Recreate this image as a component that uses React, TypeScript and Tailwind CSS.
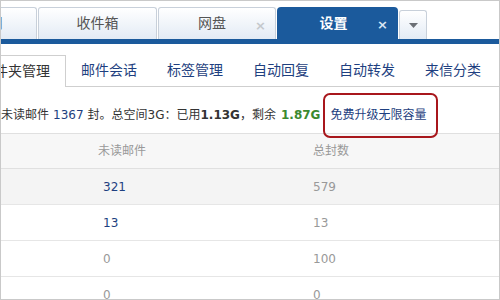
import React from "react";

const font = "font-['DejaVu_Sans','Noto_Sans_CJK_SC',sans-serif]";

type Row = { unread: number; total: number; active?: boolean };

const rows: Row[] = [
  { unread: 321, total: 579, active: true },
  { unread: 13, total: 13 },
  { unread: 0, total: 100 },
  { unread: 0, total: 0 },
];

const subTabs = ["邮件会话", "标签管理", "自动回复", "自动转发", "来信分类"];

function Close({ light }: { light?: boolean }) {
  return (
    <span
      className={`text-[13px] font-bold leading-none ${light ? "text-[#dbe6f3]" : "text-[#c4c8cc]"}`}
    >
      ×
    </span>
  );
}

export default function App() {
  return (
    <div
      className={`relative box-border h-[300px] w-[500px] overflow-hidden border border-[#c9c9c9] bg-white ${font}`}
    >
      {/* top tab strip */}
      <div className="flex flex-col">
        <div className="h-[6px]" />
        <div className="flex h-[32px] items-end gap-px">
          <div className="ml-[-83px] flex h-[32px] w-[119px] shrink-0 items-center justify-end rounded-t-[3px] border border-b-0 border-[#c8d0da] bg-gradient-to-b from-white to-[#e3ebf5] pr-[33px] text-[14px] text-[#555]">
            常用
          </div>
          <div className="flex h-[32px] w-[119px] shrink-0 items-center justify-center rounded-t-[3px] border border-b-0 border-[#c8d0da] bg-gradient-to-b from-white to-[#e3ebf5] text-[14px] text-[#555]">
            收件箱
          </div>
          <div className="relative flex h-[32px] w-[118px] shrink-0 items-center justify-center rounded-t-[3px] border border-b-0 border-[#c8d0da] bg-gradient-to-b from-white to-[#e3ebf5] pr-[10px] text-[14px] text-[#555]">
            网盘
            <span className="absolute right-[9px] top-[7px]">
              <Close />
            </span>
          </div>
          <div className="relative flex h-[32px] w-[121px] shrink-0 items-center justify-center rounded-t-[4px] bg-[#1b5a9c] pr-[8px] text-[14px] font-bold text-white">
            设置
            <span className="absolute right-[10px] top-[7px]">
              <Close light />
            </span>
          </div>
          <div className="flex h-[29px] w-[28px] shrink-0 items-center justify-center rounded-t-[3px] border border-b-0 border-[#c8d0da] bg-gradient-to-b from-white to-[#e3ebf5]">
            <svg width="9" height="5" viewBox="0 0 9 5">
              <path d="M0 0h9L4.5 5z" fill="#6b6f75" />
            </svg>
          </div>
        </div>
        <div className="h-[5px] bg-[#1b5a9c]" />
      </div>

      {/* settings sub tabs */}
      <div className="flex h-[43px] items-end border-b border-[#cfcfcf]">
        <div className="-mb-px ml-[-37px] flex h-[32px] shrink-0 items-center border border-b-0 border-[#cfcfcf] bg-white px-[15px] text-[14px] text-[#333]">
          文件夹管理
        </div>
        {subTabs.map((t) => (
          <div
            key={t}
            className="flex h-[32px] shrink-0 items-center px-[15px] text-[14px] text-[#1e3f80]"
          >
            {t}
          </div>
        ))}
      </div>

      {/* summary line */}
      <div className="flex h-[46px] items-center whitespace-nowrap pt-[10px] text-[12px] text-[#333]">
        <span className="ml-[-24px]">其中未读邮件 </span>
        <span className="px-[4px] text-[#1e3f80]">1367</span>
        <span>封。总空间3G：已用</span>
        <span className="font-bold">1.13G</span>
        <span>，剩余 </span>
        <span className="px-[5px] font-bold text-[#3b8a2f]">1.87G</span>
        <span className="pl-[5px] text-[#1e3f80]">免费升级无限容量</span>
      </div>

      {/* folder table */}
      <div className="flex h-[36px] items-center border-y border-[#e0e0e0] bg-[#f7f7f7] text-[12px] text-[#999]">
        <div className="w-[97px] shrink-0" />
        <div className="w-[215px] shrink-0">未读邮件</div>
        <div>总封数</div>
      </div>
      {rows.map((r, i) => (
        <div
          key={i}
          className={`flex h-[36px] items-center border-b border-[#e6e6e6] text-[12px] ${r.active ? "bg-[#f4f4f4]" : "bg-white"}`}
        >
          <div className="w-[102px] shrink-0" />
          <div className={`w-[210px] shrink-0 ${r.unread > 0 ? "text-[#1e3f80]" : "text-[#999]"}`}>
            {r.unread}
          </div>
          <div className="text-[#999]">{r.total}</div>
        </div>
      ))}

      {/* highlight annotation */}
      <div className="pointer-events-none absolute left-[322px] top-[92px] h-[45px] w-[115px] rounded-[7px] border-2 border-[#a8171c]" />
    </div>
  );
}
